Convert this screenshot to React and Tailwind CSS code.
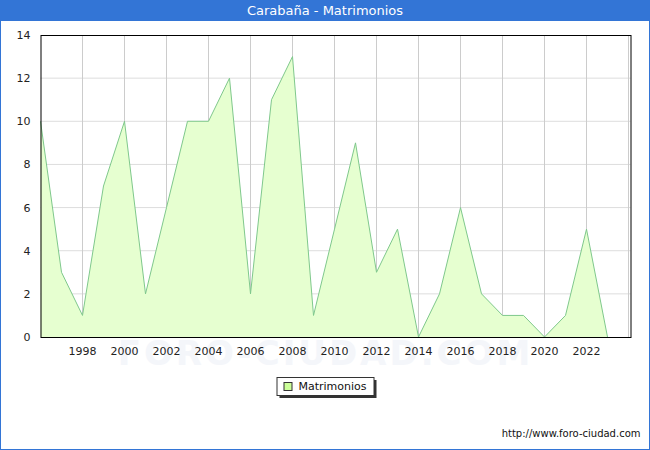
const data = [10,3,1,7,10,2,6,10,10,12,2,11,13,1,5,9,3,5,0,2,6,2,1,1,0,1,5,0];
const X = i => 40 + i * 21;
const Y = v => 337 - v * (302 / 14);

export default function App() {
  const pts = data.map((v, i) => `${X(i)},${Y(v)}`).join(' ');
  const area = `40,337 ${pts} ${X(data.length - 1)},337`;
  return (
    <div className="w-[650px] h-[450px] bg-white border-l border-r border-b border-[#3375d6] flex flex-col" style={{ fontFamily: '"DejaVu Sans", sans-serif' }}>
      <div className="h-[21px] bg-[#3375d6] text-white text-[13px] flex items-center justify-center">Carabaña - Matrimonios</div>
      <svg width="648" height="428" className="block">
        <g transform="translate(-0.5,-21)">
          <text x="325" y="365" textAnchor="middle" fontSize="34" fill="#f4f6fa" fontWeight="bold" letterSpacing="3">FORO-CIUDAD.COM</text>
          {[2,4,6,8,10,12].map(v => <line key={v} x1="40" x2="630" y1={Y(v)} y2={Y(v)} stroke="#dddddd" />)}
          {Array.from({ length: 14 }, (_, k) => 82 + k * 42).map(x => <line key={x} x1={x} x2={x} y1="35" y2="337" stroke="#cccccc" />)}
          <polygon points={area} fill="#e6ffd0" />
          <polyline points={pts} fill="none" stroke="#7fc88c" strokeWidth="1" />
          <rect x="40.5" y="35.5" width="590" height="302" fill="none" stroke="#000" />
          {[0,2,4,6,8,10,12,14].map(v => <text key={v} x="30" y={Y(v) + 4} textAnchor="end" fontSize="11" fill="#222">{v}</text>)}
          {Array.from({ length: 13 }, (_, k) => 1998 + k * 2).map((y, k) => <text key={y} x={82 + k * 42} y="355" textAnchor="middle" fontSize="11" fill="#222">{y}</text>)}
          <rect x="279" y="380" width="97" height="18" fill="#333" />
          <rect x="276.5" y="377.5" width="97" height="18" fill="#fff" stroke="#333" />
          <rect x="283.5" y="382.5" width="8" height="8" fill="#ccff99" stroke="#333" />
          <text x="298" y="390" fontSize="11" fill="#111">Matrimonios</text>
          <text x="640" y="437" textAnchor="end" fontSize="10" fill="#111">http://www.foro-ciudad.com</text>
        </g>
      </svg>
    </div>
  );
}
